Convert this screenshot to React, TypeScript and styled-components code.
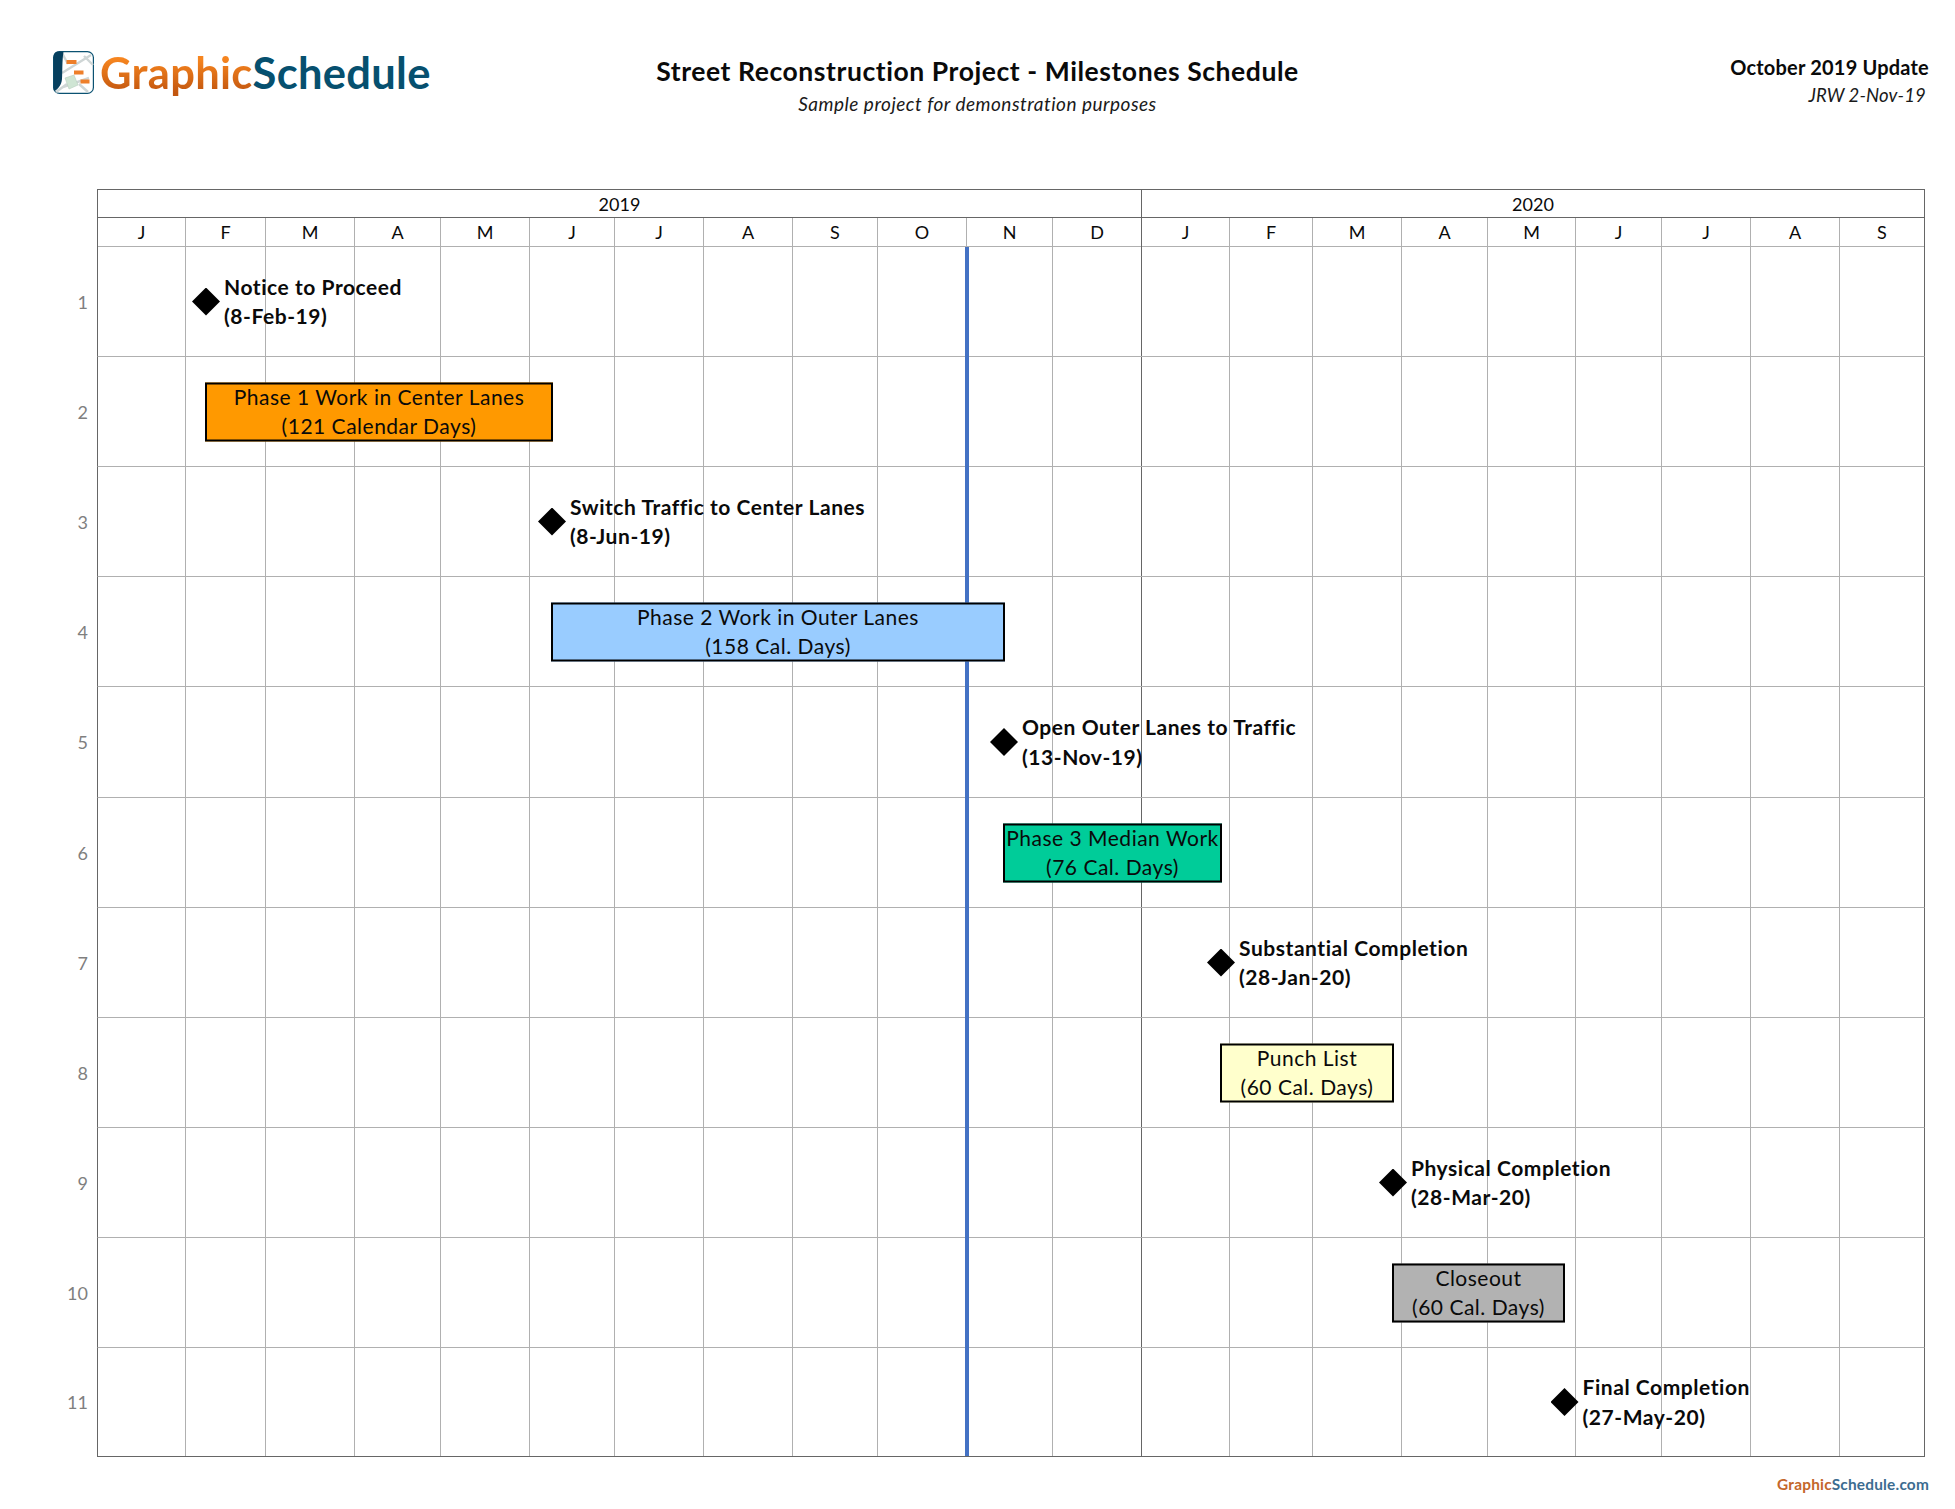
import React from "react";
import styled, { createGlobalStyle } from "styled-components";

const GRID_ORIGIN = 98;
const COLUMNS = [88, 80, 89, 86, 89, 85, 89, 89, 85, 89, 86, 89, 88, 83, 89, 86, 88, 86, 89, 89, 84];
const YEAR_BREAK = 11;
const MONTHS = "JFMAMJJASONDJFMAMJJAS".split("");
const ROW_HEIGHTS = [110, 110, 110, 110, 111, 110, 110, 110, 110, 110, 109];

type Item =
  | { kind: "milestone"; x: number; lines: [string, string] }
  | { kind: "bar"; from: number; to: number; color: string; lines: [string, string] };

const ITEMS: Item[] = [
  { kind: "milestone", x: 206, lines: ["Notice to Proceed", "(8-Feb-19)"] },
  { kind: "bar", from: 205, to: 553, color: "#ff9900", lines: ["Phase 1 Work in Center Lanes", "(121 Calendar Days)"] },
  { kind: "milestone", x: 552, lines: ["Switch Traffic to Center Lanes", "(8-Jun-19)"] },
  { kind: "bar", from: 551, to: 1005, color: "#99ccff", lines: ["Phase 2 Work in Outer Lanes", "(158 Cal. Days)"] },
  { kind: "milestone", x: 1004, lines: ["Open Outer Lanes to Traffic", "(13-Nov-19)"] },
  { kind: "bar", from: 1003, to: 1222, color: "#00cc99", lines: ["Phase 3 Median Work", "(76 Cal. Days)"] },
  { kind: "milestone", x: 1221, lines: ["Substantial Completion", "(28-Jan-20)"] },
  { kind: "bar", from: 1220, to: 1394, color: "#ffffcc", lines: ["Punch List", "(60 Cal. Days)"] },
  { kind: "milestone", x: 1393, lines: ["Physical Completion", "(28-Mar-20)"] },
  { kind: "bar", from: 1392, to: 1565, color: "#b2b2b2", lines: ["Closeout", "(60 Cal. Days)"] },
  { kind: "milestone", x: 1564.5, lines: ["Final Completion", "(27-May-20)"] },
];

const Global = createGlobalStyle`
  html, body { margin: 0; padding: 0; background: #fff; }
  body {
    font-family: Lato, "Liberation Sans", sans-serif;
    font-variant-ligatures: none;
    color: #0a0a0a;
  }
`;

const Page = styled.div`
  width: 1955px;
  height: 1509px;
  overflow: hidden;
`;

const Header = styled.header`
  display: grid;
  grid-template-columns: 1fr auto 1fr;
  height: 189px;
`;

const Brand = styled.div`
  display: flex;
  align-items: flex-start;
  gap: 6px;
  padding: 51px 0 0 53px;
`;

const BrandIcon = styled.svg`
  width: 41px;
  height: 43px;
  flex: none;
`;

const BrandName = styled.div`
  margin-top: -1px;
  font-size: 43.5px;
  font-weight: 700;
  line-height: 44px;
  letter-spacing: 0.3px;
`;

const BrandFirst = styled.span`
  background: linear-gradient(#f6851f 25%, #c2560f 90%);
  -webkit-background-clip: text;
  background-clip: text;
  color: transparent;
`;

const BrandSecond = styled.span`
  color: #06506f;
`;

const TitleBlock = styled.div`
  padding-top: 55px;
  text-align: center;
`;

const Title = styled.h1`
  margin: 0;
  font-size: 26.5px;
  line-height: 32px;
  font-weight: 700;
  letter-spacing: 0.57px;
`;

const Subtitle = styled.div`
  margin-top: 5px;
  font-size: 19px;
  line-height: 24px;
  font-style: italic;
  letter-spacing: 0.5px;
  color: #1a1a1a;
`;

const UpdateBlock = styled.div`
  padding: 54px 26px 0 0;
  text-align: right;
`;

const UpdateTitle = styled.div`
  font-size: 20px;
  line-height: 26px;
  font-weight: 700;
  letter-spacing: 0.2px;
`;

const UpdateNote = styled.div`
  margin: 3px 3px 0 0;
  font-size: 18.5px;
  line-height: 24px;
  font-style: italic;
  letter-spacing: 0.15px;
  color: #1a1a1a;
`;

const CalendarHead = styled.div`
  width: 1828px;
  margin-left: 97px;
  box-sizing: border-box;
  border: 1px solid #666;
  border-bottom: none;
`;

const YearRow = styled.div`
  display: grid;
  grid-template-columns: 1044px 782px;
  height: 28px;
  box-sizing: border-box;
  border-bottom: 1px solid #666;
`;

const YearCell = styled.div`
  font-size: 18px;
  line-height: 28px;
  text-align: center;
  box-sizing: border-box;
  &:first-child { border-right: 1px solid #666; }
`;

const MonthRow = styled.div`
  display: grid;
  grid-template-columns: ${COLUMNS.map((c) => `${c}px`).join(" ")};
  height: 29px;
  box-sizing: border-box;
  border-bottom: 1px solid #b0b0b0;
`;

const MonthCell = styled.div<{ $dark: boolean; $last: boolean }>`
  font-size: 18px;
  line-height: 29px;
  text-align: center;
  box-sizing: border-box;
  border-right: ${(p) => (p.$last ? "none" : `1px solid ${p.$dark ? "#666" : "#b0b0b0"}`)};
`;

const Body = styled.div`
  position: relative;
`;

const TodayLine = styled.div`
  position: absolute;
  left: 965px;
  top: 0;
  bottom: 1px;
  width: 4px;
  background: #4472c4;
  z-index: 1;
`;

const RowLine = styled.div`
  display: flex;
`;

const RowNumber = styled.div`
  width: 97px;
  flex: none;
  box-sizing: border-box;
  padding: 0 9px 1px 0;
  display: flex;
  align-items: center;
  justify-content: flex-end;
  font-size: 18px;
  color: #7f7f7f;
`;

const Track = styled.div<{ $last: boolean }>`
  position: relative;
  width: 1828px;
  box-sizing: border-box;
  display: grid;
  grid-template-columns: ${COLUMNS.map((c) => `${c}px`).join(" ")};
  border-left: 1px solid #666;
  border-right: 1px solid #666;
  border-bottom: 1px solid ${(p) => (p.$last ? "#666" : "#b0b0b0")};
`;

const GridCell = styled.div<{ $dark: boolean; $last: boolean }>`
  box-sizing: border-box;
  border-right: ${(p) => (p.$last ? "none" : `1px solid ${p.$dark ? "#666" : "#b0b0b0"}`)};
`;

const Bar = styled.div<{ $color: string }>`
  position: absolute;
  top: 50%;
  transform: translateY(-50%);
  height: 59px;
  box-sizing: border-box;
  border: 2px solid #000;
  padding-bottom: 2px;
  background: ${(p) => p.$color};
  z-index: 2;
  display: flex;
  flex-direction: column;
  align-items: center;
  justify-content: center;
  font-size: 21px;
  line-height: 29.5px;
  letter-spacing: 0.5px;
  white-space: nowrap;
`;

const Milestone = styled.div`
  position: absolute;
  top: 50%;
  transform: translateY(-50%);
  z-index: 2;
  display: flex;
  align-items: center;
  gap: 4px;
`;

const Diamond = styled.div`
  width: 28px;
  height: 28px;
  flex: none;
  background: #000;
  clip-path: polygon(50% 0, 100% 50%, 50% 100%, 0 50%);
`;

const MilestoneLabel = styled.div`
  margin-top: -1px;
  font-size: 21px;
  line-height: 29.5px;
  font-weight: 700;
  letter-spacing: 0.55px;
  white-space: nowrap;
`;

const Footer = styled.footer`
  padding: 17px 26px 0 0;
  text-align: right;
  font-size: 15.4px;
  line-height: 20px;
  font-weight: 700;
  letter-spacing: 0.2px;
`;

const FooterFirst = styled.span`
  color: #c4672a;
`;

const FooterSecond = styled.span`
  color: #3c6c90;
`;

function Logo() {
  return (
    <BrandIcon viewBox="0 0 41 43" aria-hidden="true">
      <rect x="0.6" y="0.6" width="39.8" height="41.8" rx="6" fill="#fff" stroke="#0b5272" strokeWidth="1.2" />
      <path d="M9 2 L15 13 M38 4 L9 22 M31 5 L40 14 M14 33 L3 41 M26 33 L35 41 M10 36 L36 27" stroke="#cfd6d6" strokeWidth="2.4" fill="none" />
      <path d="M12 27 L21 24 L25 34 L16 38 Z" fill="#cfe5d4" stroke="#b9cfc0" strokeWidth="0.6" />
      <path d="M6 0.6 H10.5 C9 10 9.5 22 9 28 C8.5 34 5 38 1.5 40 Q0.6 39 0.6 37 V6 Q0.6 0.6 6 0.6 Z" fill="#063f5e" />
      <rect x="13.5" y="9" width="10" height="4" fill="#ee7f2a" />
      <rect x="21" y="19.5" width="9.5" height="4" fill="#ee7f2a" />
      <rect x="27.5" y="28.5" width="9" height="4" fill="#ee7f2a" />
    </BrandIcon>
  );
}

function ChartItem({ item }: { item: Item }) {
  if (item.kind === "bar") {
    return (
      <Bar $color={item.color} style={{ left: item.from - GRID_ORIGIN, width: item.to - item.from }}>
        <span>{item.lines[0]}</span>
        <span>{item.lines[1]}</span>
      </Bar>
    );
  }
  return (
    <Milestone style={{ left: item.x - 14 - GRID_ORIGIN }}>
      <Diamond />
      <MilestoneLabel>
        {item.lines[0]}
        <br />
        {item.lines[1]}
      </MilestoneLabel>
    </Milestone>
  );
}

export default function App() {
  return (
    <Page>
      <Global />
      <Header>
        <Brand>
          <Logo />
          <BrandName>
            <BrandFirst>Graphic</BrandFirst>
            <BrandSecond>Schedule</BrandSecond>
          </BrandName>
        </Brand>
        <TitleBlock>
          <Title>Street Reconstruction Project - Milestones Schedule</Title>
          <Subtitle>Sample project for demonstration purposes</Subtitle>
        </TitleBlock>
        <UpdateBlock>
          <UpdateTitle>October 2019 Update</UpdateTitle>
          <UpdateNote>JRW 2-Nov-19</UpdateNote>
        </UpdateBlock>
      </Header>

      <CalendarHead>
        <YearRow>
          <YearCell>2019</YearCell>
          <YearCell>2020</YearCell>
        </YearRow>
        <MonthRow>
          {MONTHS.map((m, i) => (
            <MonthCell key={i} $dark={i === YEAR_BREAK} $last={i === MONTHS.length - 1}>
              {m}
            </MonthCell>
          ))}
        </MonthRow>
      </CalendarHead>

      <Body>
        <TodayLine />
        {ITEMS.map((item, r) => (
          <RowLine key={r} style={{ height: ROW_HEIGHTS[r] }}>
            <RowNumber>{r + 1}</RowNumber>
            <Track $last={r === ITEMS.length - 1}>
              {COLUMNS.map((_, c) => (
                <GridCell key={c} $dark={c === YEAR_BREAK} $last={c === COLUMNS.length - 1} />
              ))}
              <ChartItem item={item} />
            </Track>
          </RowLine>
        ))}
      </Body>

      <Footer>
        <FooterFirst>Graphic</FooterFirst>
        <FooterSecond>Schedule.com</FooterSecond>
      </Footer>
    </Page>
  );
}
